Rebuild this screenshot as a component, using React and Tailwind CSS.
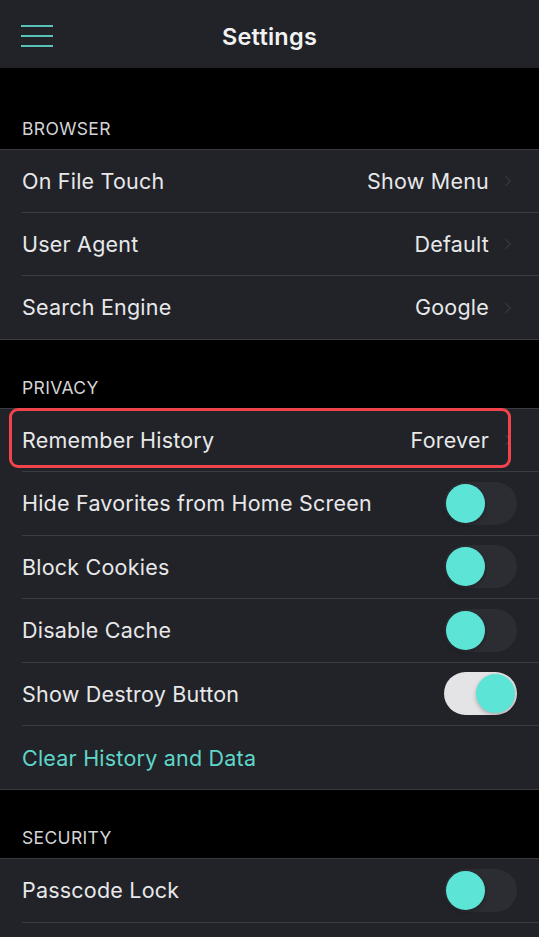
import { ChevronRight } from "lucide-react";

const browser = [
  ["On File Touch", "Show Menu"],
  ["User Agent", "Default"],
  ["Search Engine", "Google"]
];

function Toggle({ on }) {
  return (
    <div className={`flex h-[43px] w-[73px] items-center rounded-full px-[2px] ${on ? "justify-end bg-[#e4e4e6]" : "justify-start bg-[#2b2d32]"}`}>
      <div className="h-[39px] w-[39px] rounded-full bg-[#5ce4d6] shadow-[0_2px_4px_rgba(0,0,0,0.25)]" />
    </div>
  );
}

function Row({ label, children, last, highlight, accent, short }) {
  return (
    <div className={`relative flex items-center pl-[22px] ${short ? "h-[63px]" : "h-[63.4px]"}`}>
      {highlight ? <div className="pointer-events-none absolute left-[9px] top-[-1px] h-[60px] w-[502px] rounded-[9px] border-[3px] border-[#f0434b]" /> : null}
      <div className={`flex h-full flex-1 items-center justify-between pr-[22px] ${last ? "" : "border-b border-[#3a3c41]"}`}>
        <span className={`text-[21.5px] tracking-[0.01em] ${accent ? "text-[#5fd6c8]" : "text-[#e8e8ea]"}`}>{label}</span>
        {children}
      </div>
    </div>
  );
}

function Value({ text }) {
  return (
    <div className="flex items-center">
      <span className="text-[21.5px] tracking-[0.01em] text-[#e8e8ea]">{text}</span>
      <ChevronRight className="ml-[10px] h-[18px] w-[18px] text-[#34363b]" strokeWidth={2} />
    </div>
  );
}

function Section({ title, first, children }) {
  return (
    <>
      <div className={`flex items-end pb-[7px] pl-[22px] text-[17.5px] tracking-[0.02em] text-[#d4d4d6] ${first ? "h-[81px]" : "h-[68px]"}`}>{title}</div>
      <div className="border-y border-[#3a3c41] bg-[#212328]">{children}</div>
    </>
  );
}

export default function App() {
  return (
    <div className="h-[937px] overflow-hidden bg-black font-['Inter',sans-serif]">
      <header className="relative flex h-[68px] items-center justify-center bg-[#212328] pt-[5px]">
        <div className="absolute left-[21px] top-[25px] flex w-[32px] flex-col gap-[8px]">
          <div className="h-[2px] bg-[#58c2b8]" />
          <div className="h-[2px] bg-[#58c2b8]" />
          <div className="h-[2px] bg-[#58c2b8]" />
        </div>
        <h1 className="text-[23.5px] font-semibold tracking-[0.01em] text-[#f2f2f2]">Settings</h1>
      </header>
      <Section title="BROWSER" first>
        {browser.map(([label, value], i) => (
          <Row key={label} label={label} short last={i === browser.length - 1}>
            <Value text={value} />
          </Row>
        ))}
      </Section>
      <Section title="PRIVACY">
        <Row label="Remember History" highlight>
          <Value text="Forever" />
        </Row>
        <Row label="Hide Favorites from Home Screen"><Toggle /></Row>
        <Row label="Block Cookies"><Toggle /></Row>
        <Row label="Disable Cache"><Toggle /></Row>
        <Row label="Show Destroy Button"><Toggle on /></Row>
        <Row label="Clear History and Data" accent last />
      </Section>
      <Section title="SECURITY">
        <Row label="Passcode Lock"><Toggle /></Row>
        <Row label="" />
      </Section>
    </div>
  );
}
